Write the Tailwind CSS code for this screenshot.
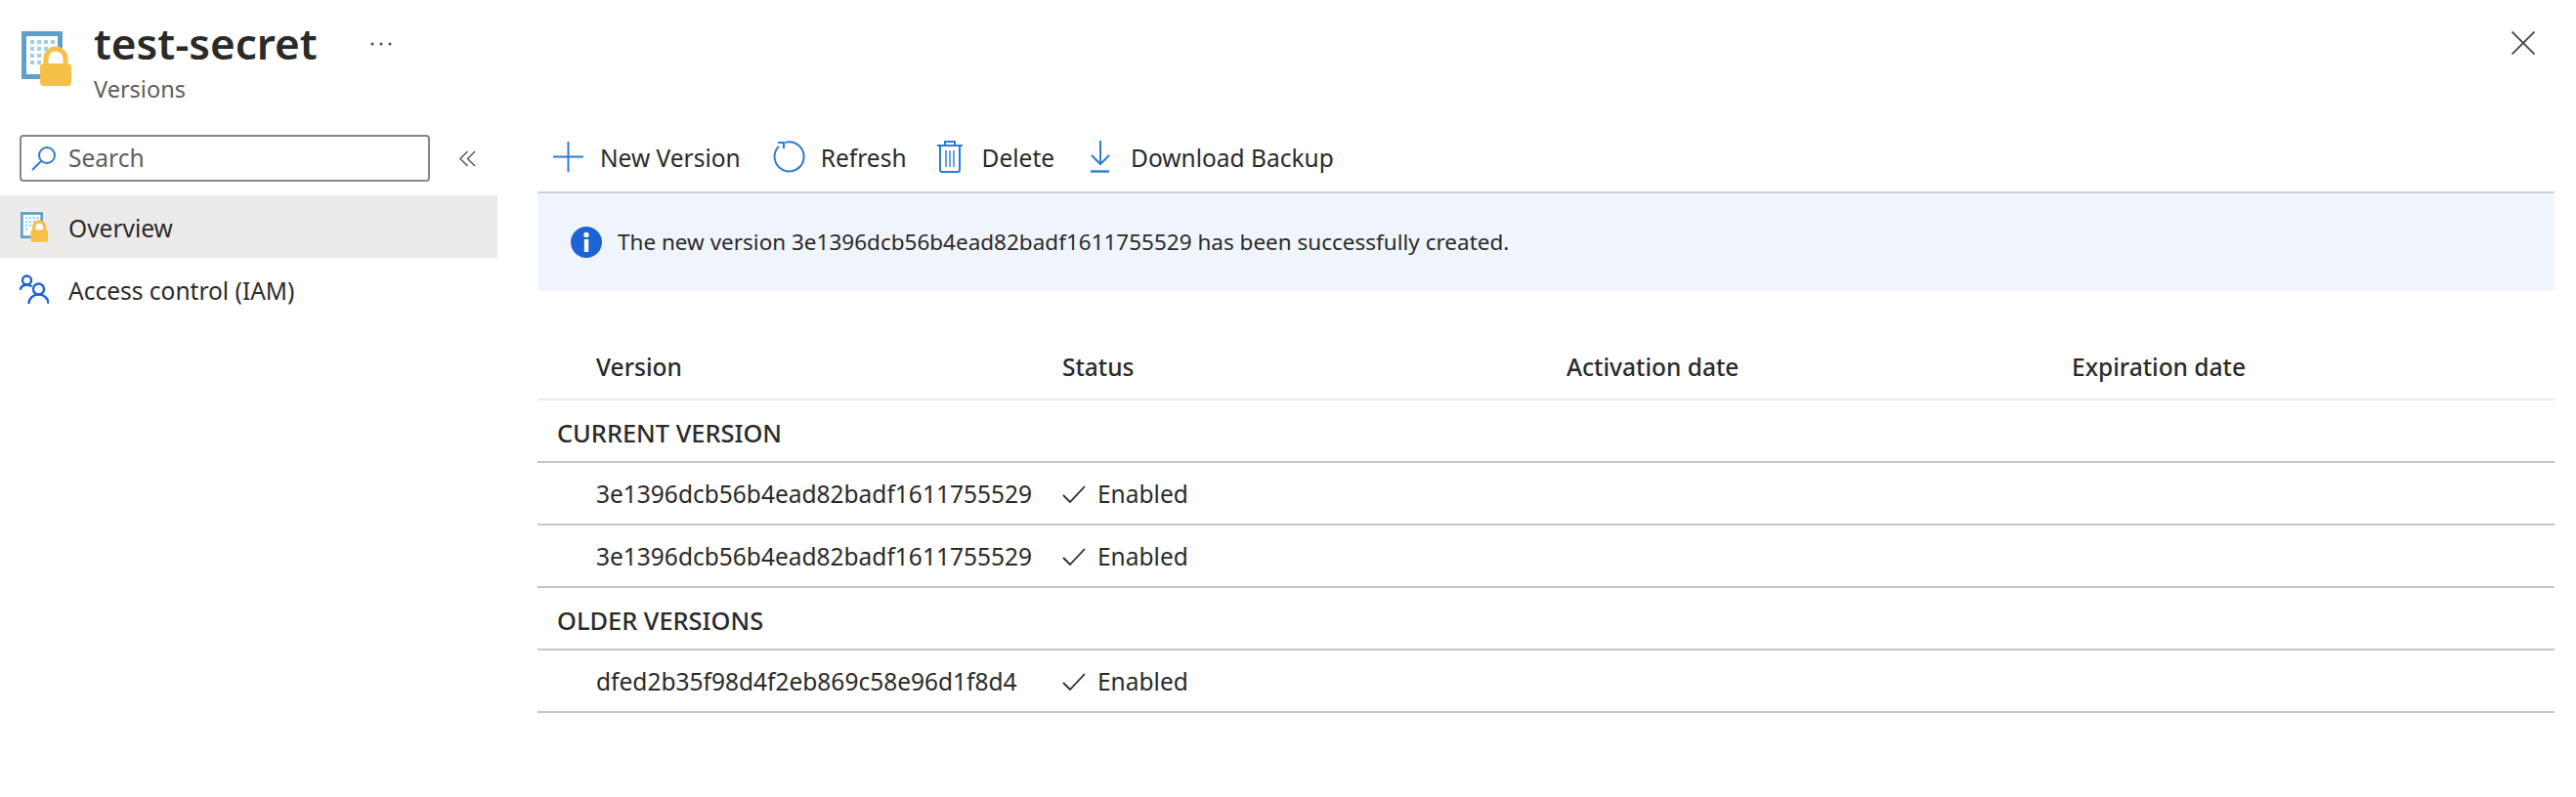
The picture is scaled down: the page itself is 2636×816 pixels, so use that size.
<!DOCTYPE html>
<html lang="en">
<head>
<meta charset="utf-8">
<title>test-secret</title>
<script src="https://cdn.jsdelivr.net/npm/@tailwindcss/browser@4"></script>
</head>
<body class="bg-white">
<div class="w-[2636px] h-[816px] overflow-hidden bg-white text-[#2b2a29] font-['Noto_Sans','Open_Sans',sans-serif] text-[24.5px] leading-[32px]">
  <header class="h-[138px] flex items-start pl-[22px]">
    <svg class="mt-[32px] shrink-0" width="51" height="56" viewBox="0 0 51 56" fill="none">
      <rect x="2.5" y="2.5" width="37" height="44" fill="#fff" stroke="#5ea0c9" stroke-width="5"/>
      <g fill="#9fd0ea"><rect x="9" y="9" width="4" height="4"/><rect x="16" y="9" width="4" height="4"/><rect x="23" y="9" width="4" height="4"/><rect x="30" y="9" width="4" height="4"/><rect x="9" y="16" width="4" height="4"/><rect x="16" y="16" width="4" height="4"/><rect x="23" y="16" width="4" height="4"/><rect x="30" y="16" width="4" height="4"/><rect x="9" y="23" width="4" height="4"/><rect x="16" y="23" width="4" height="4"/><rect x="23" y="23" width="4" height="4"/><rect x="30" y="23" width="4" height="4"/><rect x="9" y="30" width="4" height="4"/><rect x="16" y="30" width="4" height="4"/><rect x="23" y="30" width="4" height="4"/></g>
      <path d="M25 36V28a10 10 0 0 1 20 0v8" stroke="#f6c047" stroke-width="5" fill="#fff"/>
      <rect x="19" y="33" width="32" height="23" rx="4" fill="#f6c047"/>
    </svg>
    <div class="ml-[23px] mt-[16px] flex flex-col">
      <div class="flex items-start">
        <h1 class="text-[44px] leading-[56px] font-semibold">test-secret</h1>
        <svg class="ml-[54px] mt-[27px]" width="22" height="4" viewBox="0 0 22 4" fill="#4a4a4a"><circle cx="2" cy="2" r="1.5"/><circle cx="11" cy="2" r="1.5"/><circle cx="20" cy="2" r="1.5"/></svg>
      </div>
      <p class="text-[23.5px] leading-[32px] text-[#605e5c] mt-[3px]">Versions</p>
    </div>
    <svg class="ml-auto mr-[42px] mt-[32px]" width="24" height="24" viewBox="0 0 24 24" fill="none" stroke="#444" stroke-width="1.8"><path d="M0.5 0.5 23.5 23.5M23.5 0.5 0.5 23.5"/></svg>
  </header>
  <div class="flex items-start">
    <aside class="w-[509px] shrink-0">
      <div class="flex items-center h-[48px]">
        <div class="ml-[20px] w-[420px] h-[48px] border-2 border-[#8a8886] rounded-[4px] flex items-center pl-[10px] text-[#605e5c]">
          <svg width="26" height="26" viewBox="0 0 26 26" fill="none" stroke="#2b7cd3" stroke-width="2"><circle cx="16" cy="10" r="8"/><path d="M10 16 1 25"/></svg>
          <span class="ml-[12px]">Search</span>
        </div>
        <svg class="ml-[30px]" width="17" height="17" viewBox="0 0 18 18" fill="none" stroke="#555" stroke-width="1.5"><path d="M9 1 1 9l8 8M17 1 9 9l8 8"/></svg>
      </div>
      <nav class="mt-[14px]">
        <a class="h-[64px] bg-[#edebe9] flex items-center pl-[21px]">
          <svg class="shrink-0" width="28" height="31" viewBox="0 0 51 56" fill="none">
            <rect x="2.5" y="2.5" width="37" height="44" fill="#fff" stroke="#5ea0c9" stroke-width="5"/>
            <g fill="#9fd0ea"><rect x="9" y="9" width="4" height="4"/><rect x="16" y="9" width="4" height="4"/><rect x="23" y="9" width="4" height="4"/><rect x="30" y="9" width="4" height="4"/><rect x="9" y="16" width="4" height="4"/><rect x="16" y="16" width="4" height="4"/><rect x="23" y="16" width="4" height="4"/><rect x="30" y="16" width="4" height="4"/><rect x="9" y="23" width="4" height="4"/><rect x="16" y="23" width="4" height="4"/><rect x="23" y="23" width="4" height="4"/><rect x="30" y="23" width="4" height="4"/><rect x="9" y="30" width="4" height="4"/></g>
            <path d="M25 36V28a10 10 0 0 1 20 0v8" stroke="#f6c047" stroke-width="6" fill="#fff"/>
            <rect x="19" y="33" width="32" height="23" rx="4" fill="#f6c047"/>
          </svg>
          <span class="ml-[21px] pt-[4px]">Overview</span>
        </a>
        <a class="h-[64px] flex items-center pl-[20px]">
          <svg class="shrink-0" width="30" height="30" viewBox="0 0 30 30" fill="none" stroke="#1f62d6" stroke-width="2.4"><circle cx="7.5" cy="6" r="4.5"/><path d="M0.5 16c1-3.500 3.500-5.500 7-5.500 2 0 3.500.5 5 2"/><circle cx="19.500" cy="15" r="5.500"/><path d="M9.500 30c0-5.500 4.500-9.500 10-9.500s10 4 10 9.500"/></svg>
          <span class="ml-[20px] pt-[4px]">Access control (IAM)</span>
        </a>
      </nav>
    </aside>
    <main class="ml-[41px] w-[2064px]">
      <div class="h-[60px] pb-[14px] border-b-2 border-[#d2d0ce] flex items-center">
        <div class="flex items-center pl-[16px]">
          <svg width="31" height="31" viewBox="0 0 31 31" fill="none" stroke="#2b7cd3" stroke-width="2"><path d="M15.500 0V31M0 15.500H31"/></svg>
          <span class="ml-[17px] pt-[4px]">New Version</span>
        </div>
        <div class="flex items-center ml-[33px]">
          <svg width="33" height="33" viewBox="0 0 33 33" fill="none" stroke="#2b7cd3" stroke-width="2"><path d="M12.500 2A15 15 0 1 1 5.900 5.900"/><path d="M5 2H11V8"/></svg>
          <span class="ml-[16px] pt-[4px]">Refresh</span>
        </div>
        <div class="flex items-center ml-[31px]">
          <svg width="26" height="33" viewBox="0 0 26 33" fill="none" stroke="#2b7cd3" stroke-width="2"><path d="M0 5H26M8 5V1H18V5M3 5V30a2 2 0 0 0 2 2H21a2 2 0 0 0 2-2V5"/><path d="M9 10V27M13 10V27M17 10V27" stroke-width="1.400"/></svg>
          <span class="ml-[20px] pt-[4px]">Delete</span>
        </div>
        <div class="flex items-center ml-[36px]">
          <svg width="22" height="33" viewBox="0 0 22 33" fill="none" stroke="#2b7cd3" stroke-width="2"><path d="M11 0V23M2 15l9 9 9-9"/><path d="M1 31.500H20" stroke-width="2.400"/></svg>
          <span class="ml-[20px] pt-[4px]">Download Backup</span>
        </div>
      </div>
      <div class="h-[100px] w-full bg-[#f0f5fd] rounded-b-[4px] flex items-center pl-[34px] text-[22.5px]">
        <svg width="32" height="32" viewBox="0 0 32 32"><circle cx="16" cy="16" r="16" fill="#1f62d6"/><circle cx="16" cy="8.500" r="2.700" fill="#fff"/><rect x="13.800" y="13" width="4.400" height="13" fill="#fff"/></svg>
        <span class="ml-[16px]">The new version 3e1396dcb56b4ead82badf1611755529 has been successfully created.</span>
      </div>
      <div class="mt-[46px]">
        <div class="h-[66px] grid grid-cols-[537px_516px_517px_1fr] items-center border-b-2 border-[#edebe9] font-medium">
          <div class="pl-[60px]">Version</div><div>Status</div><div>Activation date</div><div>Expiration date</div>
        </div>
        <div class="h-[64px] flex items-center pl-[20px] pt-[4px] border-b-2 border-[#c8c6c4] font-medium text-[25.4px]">CURRENT VERSION</div>
        <div class="h-[64px] grid grid-cols-[537px_1fr] items-center pt-[2px] border-b-2 border-[#c8c6c4]">
          <div class="pl-[60px]">3e1396dcb56b4ead82badf1611755529</div>
          <div class="flex items-center"><svg width="24" height="20" viewBox="0 0 24 20" fill="none" stroke="#2b2a29" stroke-width="1.800"><path d="M1 11l7 7L23 2"/></svg><span class="ml-[12px]">Enabled</span></div>
        </div>
        <div class="h-[64px] grid grid-cols-[537px_1fr] items-center pt-[2px] border-b-2 border-[#c8c6c4]">
          <div class="pl-[60px]">3e1396dcb56b4ead82badf1611755529</div>
          <div class="flex items-center"><svg width="24" height="20" viewBox="0 0 24 20" fill="none" stroke="#2b2a29" stroke-width="1.800"><path d="M1 11l7 7L23 2"/></svg><span class="ml-[12px]">Enabled</span></div>
        </div>
        <div class="h-[64px] flex items-center pl-[20px] pt-[4px] border-b-2 border-[#c8c6c4] font-medium text-[25.4px]">OLDER VERSIONS</div>
        <div class="h-[64px] grid grid-cols-[537px_1fr] items-center pt-[2px] border-b-2 border-[#c8c6c4]">
          <div class="pl-[60px]">dfed2b35f98d4f2eb869c58e96d1f8d4</div>
          <div class="flex items-center"><svg width="24" height="20" viewBox="0 0 24 20" fill="none" stroke="#2b2a29" stroke-width="1.800"><path d="M1 11l7 7L23 2"/></svg><span class="ml-[12px]">Enabled</span></div>
        </div>
      </div>
    </main>
  </div>
</div>
</body>
</html>
